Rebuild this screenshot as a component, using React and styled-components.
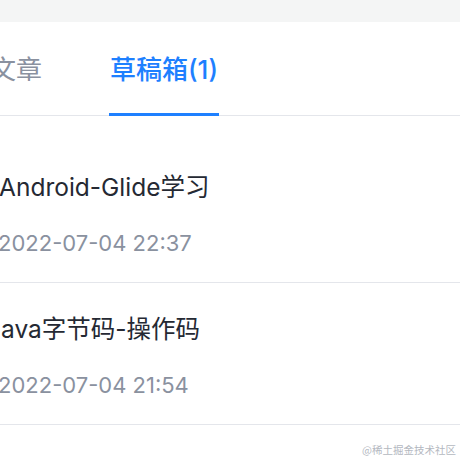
import React from "react";
import styled, { createGlobalStyle } from "styled-components";

const GlobalStyle = createGlobalStyle`
  html, body {
    margin: 0;
    padding: 0;
    background: #ffffff;
  }
  body {
    font-family: Inter, "Noto Sans CJK SC", sans-serif;
    -webkit-font-smoothing: antialiased;
  }
`;

const Page = styled.div`
  position: relative;
  width: 460px;
  height: 460px;
  overflow: hidden;
  background: #ffffff;
`;

const TopBand = styled.div`
  height: 22px;
  background: #f4f5f5;
`;

const TabBar = styled.div`
  display: flex;
  align-items: flex-end;
  gap: 66px;
  margin-left: -11px;
  border-bottom: 1px solid #e4e6eb;
`;

const Tab = styled.div`
  padding: 31px 1px 26px;
  line-height: 34px;
  font-size: 26px;
  font-weight: ${(p) => (p.$active ? 500 : 400)};
  color: ${(p) => (p.$active ? "#1e80ff" : "#8a919f")};
  border-bottom: 3px solid ${(p) => (p.$active ? "#1e80ff" : "transparent")};
  margin-bottom: -1px;
  white-space: nowrap;
`;

const List = styled.div`
  padding-top: 25px;
`;

const Item = styled.div`
  display: flex;
  flex-direction: column;
  padding: 29px 0 22px;
  border-bottom: 1px solid #e4e6eb;
`;

const Title = styled.div`
  margin-left: ${(p) => p.$shift}px;
  font-size: 24.5px;
  line-height: 34px;
  color: #252933;
  white-space: nowrap;
`;

const Time = styled.div`
  margin-top: 22px;
  margin-left: -2px;
  font-size: 22px;
  line-height: 34px;
  color: #8a919f;
  white-space: nowrap;
`;

const Watermark = styled.div`
  position: absolute;
  right: 4px;
  bottom: 3px;
  font-family: "Noto Sans CJK SC", sans-serif;
  font-size: 10.5px;
  line-height: 14px;
  color: #b4b8bf;
`;

const drafts = [
  { title: "Android-Glide学习", time: "2022-07-04 22:37", shift: -1 },
  { title: "Java字节码-操作码", time: "2022-07-04 21:54", shift: -13 },
];

export default function App() {
  return (
    <Page>
      <GlobalStyle />
      <TopBand />
      <TabBar>
        <Tab>文章</Tab>
        <Tab $active>草稿箱(1)</Tab>
      </TabBar>
      <List>
        {drafts.map((d) => (
          <Item key={d.title}>
            <Title $shift={d.shift}>{d.title}</Title>
            <Time>{d.time}</Time>
          </Item>
        ))}
      </List>
      <Watermark>@稀土掘金技术社区</Watermark>
    </Page>
  );
}
